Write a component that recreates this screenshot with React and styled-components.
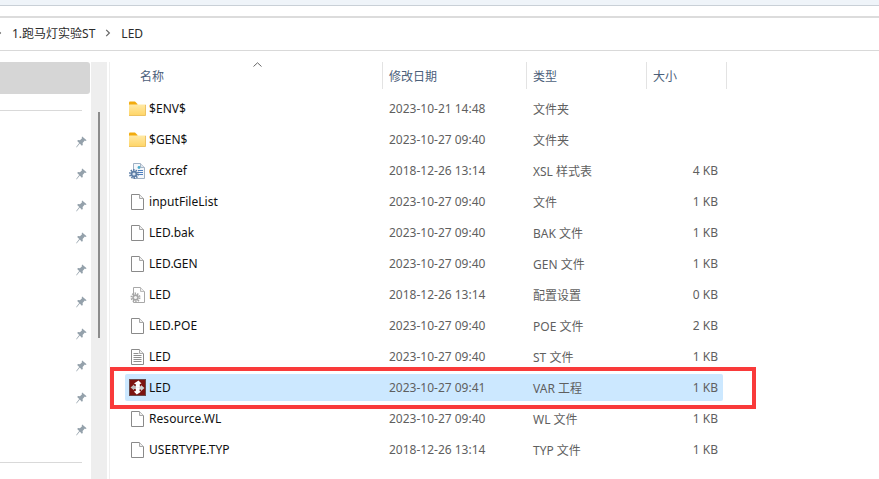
import React from 'react';
import styled, { createGlobalStyle } from 'styled-components';

const GlobalStyle = createGlobalStyle`
  html, body {
    margin: 0;
    padding: 0;
    background: #fff;
    overflow: hidden;
  }
  body {
    font-family: "Noto Sans", "Noto Sans CJK SC", sans-serif;
    font-size: 12px;
  }
`;

const Page = styled.div`
  position: relative;
  width: 879px;
  height: 479px;
  overflow: hidden;
  background: #fff;
`;

const TitleStrip = styled.div`
  height: 5px;
  background: #eff4f9;
  border-bottom: 1px solid #c9d0d7;
`;

const ToolGap = styled.div`
  height: 10px;
  border-bottom: 2px solid #dcdcdc;
`;

const AddressBar = styled.div`
  height: 33px;
  padding-bottom: 2px;
  box-sizing: border-box;
  border-bottom: 1px solid #d9d9d9;
  display: flex;
  align-items: center;
  gap: 10px;
  color: #2b2b2b;
  font-size: 12px;
`;

const ClippedChevron = styled.div`
  width: 2px;
  overflow: hidden;
  display: flex;
  justify-content: flex-end;
`;

const Crumb = styled.span`
  white-space: nowrap;
`;

const Main = styled.div`
  display: flex;
  height: 429px;
  padding-top: 11px;
  box-sizing: border-box;
`;

const Sidebar = styled.div`
  width: 91px;
  flex: none;
`;

const QuickAccess = styled.div`
  height: 32px;
  background: #d6d6d6;
  border-radius: 0 3px 3px 0;
  width: 90px;
`;

const SideRule = styled.div`
  height: 1px;
  width: 82px;
  background: #d9d9d9;
  margin-top: ${(p) => p.$top}px;
`;

const PinList = styled.div`
  display: flex;
  flex-direction: column;
  align-items: flex-end;
  gap: 20px;
  padding: 25px 4px 0 0;
  height: 351px;
  box-sizing: border-box;
`;

const ScrollTrack = styled.div`
  width: 16px;
  flex: none;
  background: #eeeeee;
  display: flex;
  justify-content: center;
`;

const ScrollThumb = styled.div`
  width: 2px;
  height: 226px;
  margin-top: 50px;
  margin-left: -1px;
  background: #8c8c8c;
`;

const Splitter = styled.div`
  width: 1px;
  margin-left: 2px;
  flex: none;
  background: #efefef;
`;

const FileArea = styled.div`
  flex: 1;
  padding-left: 15px;
  min-width: 0;
`;

const HeaderRow = styled.div`
  position: relative;
  display: grid;
  grid-template-columns: 258px 144px 120px 80px;
  height: 27px;
  color: #4c607a;
  margin-bottom: 6px;
`;

const HeaderCell = styled.div`
  display: flex;
  align-items: center;
  padding-left: ${(p) => p.$pad}px;
  border-right: 1px solid #e3e3e3;
  box-sizing: border-box;
  font-size: 12px;
`;

const SortCaret = styled.svg`
  position: absolute;
  left: 128px;
  top: 0;
`;

const Row = styled.div`
  display: grid;
  grid-template-columns: 24px 240px 144px 101px 84px;
  height: 27px;
  margin-bottom: 4px;
  width: 598px;
  align-items: center;
  border-radius: 2px;
  background: ${(p) => (p.$selected ? '#cce8ff' : 'transparent')};
  color: #5f5f5f;
`;

const IconSlot = styled.div`
  display: flex;
  justify-content: center;
  align-items: center;
  height: 18px;
`;

const Name = styled.div`
  color: #111;
  white-space: nowrap;
  letter-spacing: 0.05px;
`;

const Cell = styled.div`
  white-space: nowrap;
`;

const SizeCell = styled.div`
  white-space: nowrap;
  text-align: right;
`;

const Highlight = styled.div`
  position: absolute;
  left: 110px;
  top: 367px;
  width: 638px;
  height: 34px;
  border: 4px solid #f93a3a;
`;

const Folder = () => (
  <svg width="17" height="15" viewBox="0 0 17 15">
    <defs>
      <linearGradient id="folderBody" x1="0" y1="0" x2="0" y2="1">
        <stop offset="0" stopColor="#ffe9a6" />
        <stop offset="1" stopColor="#ffd566" />
      </linearGradient>
    </defs>
    <path d="M0 1.5 Q0 0.5 1 0.5 H6 L8.5 3 V5 H0 Z" fill="#f2ab0f" />
    <rect x="0" y="3.5" width="16.5" height="11" rx="0.5" fill="url(#folderBody)" />
    <path d="M0 14.5 H16.5 V4 H16" fill="none" stroke="#e9b84c" strokeWidth="0.8" />
  </svg>
);

const BlankFile = () => (
  <svg width="13" height="16" viewBox="0 0 13 16">
    <path d="M0.5 0.5 H8.5 L12.5 4.5 V15.5 H0.5 Z" fill="#fff" stroke="#8a8a8a" />
    <path d="M8.5 0.5 V4.5 H12.5" fill="#eee" stroke="#a8a8a8" />
  </svg>
);

const TextFile = () => (
  <svg width="13" height="16" viewBox="0 0 13 16">
    <path d="M0.5 0.5 H8.5 L12.5 4.5 V15.5 H0.5 Z" fill="#fff" stroke="#8a8a8a" />
    <path d="M8.5 0.5 V4.5 H12.5" fill="#eee" stroke="#a8a8a8" />
    <path d="M2.5 4.5 H7.5 M2.5 6.5 H10.5 M2.5 8.5 H10.5 M2.5 10.5 H10.5 M2.5 12.5 H10.5" stroke="#8f8f8f" />
  </svg>
);

const Gear = ({ cx, cy, r, color, hole }) => (
  <g>
    <circle cx={cx} cy={cy} r={r} fill="none" stroke={color} strokeWidth="2" strokeDasharray="1.4 1.1" />
    <circle cx={cx} cy={cy} r={r - 0.8} fill={color} />
    <circle cx={cx} cy={cy} r={r - 2.4} fill={hole} />
  </g>
);

const ConfigFile = () => (
  <svg width="15" height="16" viewBox="0 0 15 16">
    <path d="M3.5 0.5 H10.5 L14.5 4.5 V15.5 H3.5 Z" fill="#fff" stroke="#a8a8a8" />
    <path d="M10.5 0.5 V4.5 H14.5" fill="#eee" stroke="#bbb" />
    <Gear cx={5.5} cy={10.5} r={4} color="#a6a6a6" hole="#f4f4f4" />
  </svg>
);

const XslFile = () => (
  <svg width="17" height="16" viewBox="0 0 17 16">
    <path d="M4.5 0.5 H11.5 L15.5 4.5 V15.5 H4.5 Z" fill="#f4f7fb" stroke="#9fb0c4" />
    <path d="M11.5 0.5 V4.5 H15.5" fill="#dfe6ee" stroke="#aab7c6" />
    <path d="M9 7.5 H14 M9 9.5 H14 M9 11.5 H14" stroke="#4d7fc0" />
    <circle cx="10" cy="4.5" r="1.4" fill="#49a9c9" />
    <Gear cx={5} cy={11} r={4} color="#5c7da6" hole="#dce6f2" />
  </svg>
);

const VarProject = () => (
  <svg width="17" height="17" viewBox="0 0 17 17">
    <rect x="0.5" y="0.5" width="16" height="16" fill="#7d1410" stroke="#6a4a4a" />
    <path d="M1.5 8.5 L5 5.5 V6.8 H9 V10 H5 V11.2 Z" fill="#bdbdbd" />
    <path d="M15.5 9 L12 6 V7.3 H8 V10.5 H12 V12 Z" fill="#d0d0d0" />
    <path d="M9.5 1.5 L12.5 4.5 L10.8 5 V8 L7 8.8 V5.5 L5 4.5 Z" fill="#fff" />
    <path d="M7.8 15.5 L4.8 12.5 L6.8 12 V8.5 H10.5 V12 L12 12.8 Z" fill="#fff" />
  </svg>
);

const Pin = () => (
  <svg width="11" height="12" viewBox="0 0 11 12">
    <path d="M6.2 0.5 L10.6 4.2 L9.6 5 L8.8 4.6 L6.6 7 L6.8 9 L5.8 9.8 L3.8 7.6 L0.6 11.4 L0.2 11 L3.2 7 L1.2 5 L2 4 L4 4.2 L6.2 2 L5.6 1.2 Z" fill="#94a1ab" />
  </svg>
);

const Chevron = () => (
  <svg width="6" height="8" viewBox="0 0 6 8" style={{ flex: 'none' }}>
    <path d="M1.2 0.8 L4.4 4 L1.2 7.2" fill="none" stroke="#666" strokeWidth="1.2" />
  </svg>
);

const files = [
  { icon: Folder, name: '$ENV$', date: '2023-10-21 14:48', type: '文件夹', size: '' },
  { icon: Folder, name: '$GEN$', date: '2023-10-27 09:40', type: '文件夹', size: '' },
  { icon: XslFile, name: 'cfcxref', date: '2018-12-26 13:14', type: 'XSL 样式表', size: '4 KB' },
  { icon: BlankFile, name: 'inputFileList', date: '2023-10-27 09:40', type: '文件', size: '1 KB' },
  { icon: BlankFile, name: 'LED.bak', date: '2023-10-27 09:40', type: 'BAK 文件', size: '1 KB' },
  { icon: BlankFile, name: 'LED.GEN', date: '2023-10-27 09:40', type: 'GEN 文件', size: '1 KB' },
  { icon: ConfigFile, name: 'LED', date: '2018-12-26 13:14', type: '配置设置', size: '0 KB' },
  { icon: BlankFile, name: 'LED.POE', date: '2023-10-27 09:40', type: 'POE 文件', size: '2 KB' },
  { icon: TextFile, name: 'LED', date: '2023-10-27 09:40', type: 'ST 文件', size: '1 KB' },
  { icon: VarProject, name: 'LED', date: '2023-10-27 09:41', type: 'VAR 工程', size: '1 KB', selected: true },
  { icon: BlankFile, name: 'Resource.WL', date: '2023-10-27 09:40', type: 'WL 文件', size: '1 KB' },
  { icon: BlankFile, name: 'USERTYPE.TYP', date: '2018-12-26 13:14', type: 'TYP 文件', size: '1 KB' },
];

const App = () => {
  return (
    <Page>
      <GlobalStyle />
      <TitleStrip />
      <ToolGap />
      <AddressBar>
        <ClippedChevron>
          <Chevron />
        </ClippedChevron>
        <Crumb>1.跑马灯实验ST</Crumb>
        <Chevron />
        <Crumb>LED</Crumb>
      </AddressBar>
      <Main>
        <Sidebar>
          <QuickAccess />
          <SideRule $top={16} />
          <PinList>
            {Array.from({ length: 10 }).map((_, i) => (
              <Pin key={i} />
            ))}
          </PinList>
          <SideRule $top={0} />
        </Sidebar>
        <ScrollTrack>
          <ScrollThumb />
        </ScrollTrack>
        <Splitter />
        <FileArea>
          <HeaderRow>
            <HeaderCell $pad={15}>名称</HeaderCell>
            <HeaderCell $pad={6}>修改日期</HeaderCell>
            <HeaderCell $pad={6}>类型</HeaderCell>
            <HeaderCell $pad={6}>大小</HeaderCell>
            <SortCaret width="9" height="5" viewBox="0 0 9 5">
              <path d="M0.5 4.5 L4.5 0.8 L8.5 4.5" fill="none" stroke="#666" />
            </SortCaret>
          </HeaderRow>
          {files.map((file, i) => {
            const Icon = file.icon;
            return (
              <Row key={i} $selected={file.selected}>
                <IconSlot>
                  <Icon />
                </IconSlot>
                <Name>{file.name}</Name>
                <Cell>{file.date}</Cell>
                <Cell>{file.type}</Cell>
                <SizeCell>{file.size}</SizeCell>
              </Row>
            );
          })}
        </FileArea>
      </Main>
      <Highlight />
    </Page>
  );
};

export default App;
